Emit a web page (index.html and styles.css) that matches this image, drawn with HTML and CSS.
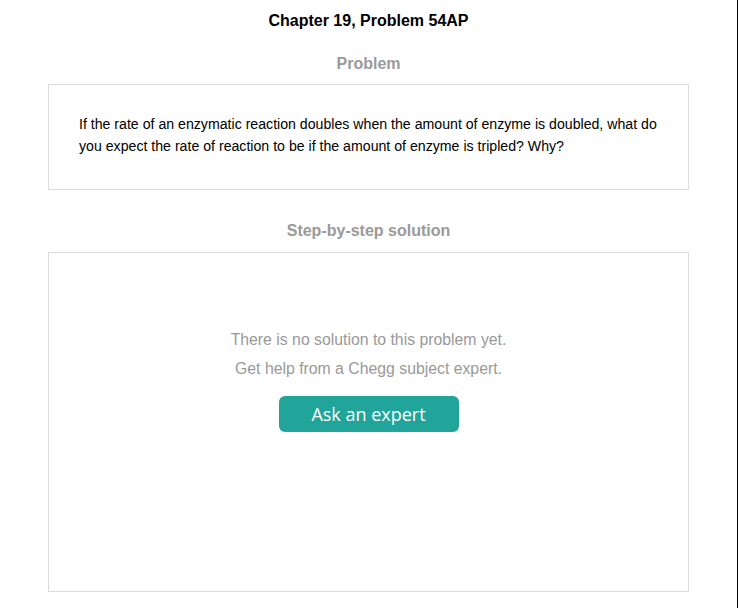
FILE: index.html
```html
<!DOCTYPE html>
<html>
<head>
<meta charset="utf-8">
<link rel="stylesheet" href="styles.css">
</head>
<body>
<div class="page">
  <h1 class="title">Chapter 19, Problem 54AP</h1>
  <h2 class="section-title section-title--problem">Problem</h2>
  <div class="card card--problem">
    <p class="problem-text">If the rate of an enzymatic reaction doubles when the amount of enzyme is doubled, what do you expect the rate of reaction to be if the amount of enzyme is tripled? Why?</p>
  </div>
  <h2 class="section-title section-title--solution">Step-by-step solution</h2>
  <div class="card card--solution">
    <p class="empty-text">There is no solution to this problem yet.<br>Get help from a Chegg subject expert.</p>
    <button class="ask-btn" type="button">Ask an expert</button>
  </div>
</div>
</body>
</html>
```

FILE: styles.css
```css
html, body {
  margin: 0;
  padding: 0;
  background: #ffffff;
}
.page {
  box-sizing: border-box;
  width: 738px;
  height: 608px;
  border-right: 1px solid #000000;
  padding: 11px 48px 0 48px;
  font-family: "Liberation Sans", Arial, sans-serif;
  display: flex;
  flex-direction: column;
}
.title {
  margin: 0;
  font-size: 16px;
  line-height: 20px;
  font-weight: bold;
  color: #000000;
  text-align: center;
}
.section-title {
  margin: 0;
  font-size: 16px;
  line-height: 20px;
  font-weight: bold;
  color: #9a9a9a;
  text-align: center;
}
.section-title--problem {
  margin-top: 23px;
  margin-bottom: 10px;
}
.section-title--solution {
  margin-top: 31px;
  margin-bottom: 11px;
}
.card {
  border: 1px solid #dcdcdc;
}
.card--problem {
  padding: 28px 30px 32px 30px;
}
.problem-text {
  margin: 0;
  font-size: 14.15px;
  line-height: 22px;
  color: #000000;
}
.card--solution {
  padding: 72px 0 159px 0;
  display: flex;
  flex-direction: column;
  align-items: center;
}
.empty-text {
  margin: 0;
  font-size: 15.8px;
  line-height: 29px;
  color: #999999;
  text-align: center;
}
.ask-btn {
  margin-top: 13px;
  width: 180px;
  height: 36px;
  border: none;
  border-radius: 6px;
  background: #21a59b;
  color: #ffffff;
  font-family: "Open Sans", "DejaVu Sans", sans-serif;
  font-size: 18px;
  line-height: 36px;
  padding: 0;
}
```
